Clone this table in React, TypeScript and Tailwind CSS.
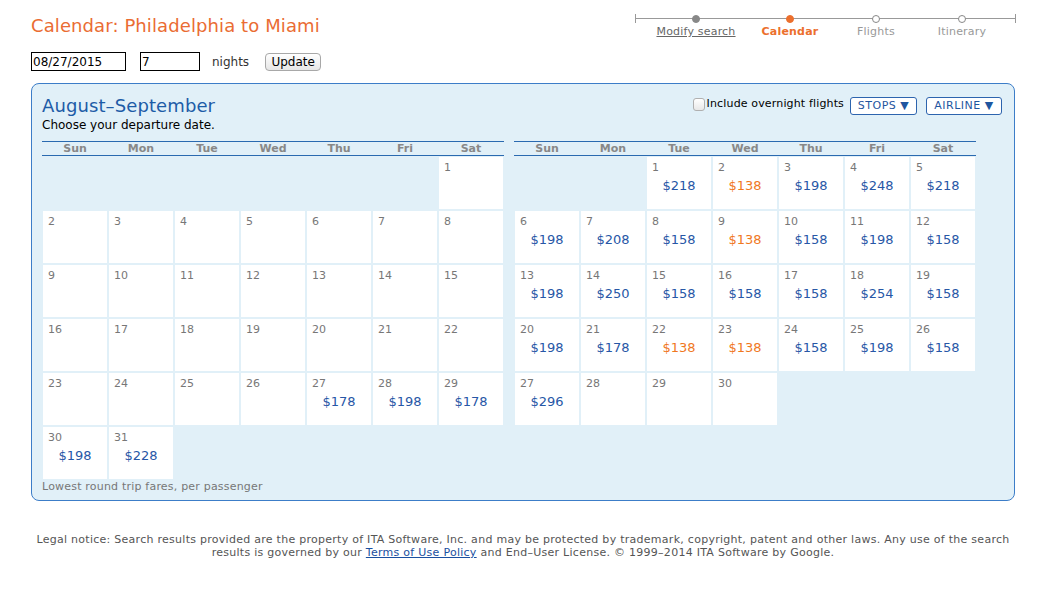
import React from "react";

const augPrices: Record<number, [string, boolean?]> = {
  27: ["$178"],
  28: ["$198"],
  29: ["$178"],
  30: ["$198"],
  31: ["$228"],
};

const sepPrices: Record<number, [string, boolean?]> = {
  1: ["$218"], 2: ["$138", true], 3: ["$198"], 4: ["$248"], 5: ["$218"],
  6: ["$198"], 7: ["$208"], 8: ["$158"], 9: ["$138", true], 10: ["$158"], 11: ["$198"], 12: ["$158"],
  13: ["$198"], 14: ["$250"], 15: ["$158"], 16: ["$158"], 17: ["$158"], 18: ["$254"], 19: ["$158"],
  20: ["$198"], 21: ["$178"], 22: ["$138", true], 23: ["$138", true], 24: ["$158"], 25: ["$198"], 26: ["$158"],
  27: ["$296"],
};

const weekdays = ["Sun", "Mon", "Tue", "Wed", "Thu", "Fri", "Sat"];

function MonthGrid({ offset, days, rows, prices }: { offset: number; days: number; rows: number; prices: Record<number, [string, boolean?]> }) {
  const cells = Array.from({ length: rows * 7 }, (_, i) => i - offset + 1);
  return (
    <div className="w-[462px]">
      <div className="grid h-[15px] grid-cols-7 border-y border-[#2a6ab0] pt-[1px] text-center text-[11px] font-bold leading-[12px] text-[#888]">
        {weekdays.map((d) => (
          <div key={d}>{d}</div>
        ))}
      </div>
      <div className="grid auto-rows-[52px] grid-cols-7 gap-[2px] px-[1px] pt-[1px]">
        {cells.map((day, i) =>
          day >= 1 && day <= days ? (
            <div key={i} className="bg-white pl-[5px] pt-[4px]">
              <div className="text-[11px] leading-[13px] text-[#777]">{day}</div>
              {prices[day] ? (
                <div className={`mt-[4px] pr-[5px] text-center text-[13px] leading-[16px] ${prices[day][1] ? "text-[#f0781e]" : "text-[#2757a6]"}`}>
                  {prices[day][0]}
                </div>
              ) : null}
            </div>
          ) : (
            <div key={i} />
          )
        )}
      </div>
    </div>
  );
}

function Stepper() {
  const steps = [
    { label: "Modify search", w: "w-[80px]", dot: "bg-[#888] border-[#888]", text: "text-[#666] underline" },
    { label: "Calendar", w: "w-[108px]", dot: "bg-[#ec6f2d] border-[#ec6f2d]", text: "font-bold text-[#ec6f2d]" },
    { label: "Flights", w: "w-[64px]", dot: "bg-white border-[#888]", text: "text-[#999]" },
    { label: "Itinerary", w: "w-[108px]", dot: "bg-white border-[#888]", text: "text-[#999]" },
  ];
  return (
    <div className="relative mr-[-1px] flex w-[381px] pl-[21px]">
      <div className="absolute left-0 right-0 top-[18px] h-px bg-[#999]" />
      <div className="absolute left-0 top-[14px] h-[9px] w-px bg-[#999]" />
      <div className="absolute right-0 top-[14px] h-[9px] w-px bg-[#999]" />
      {steps.map((s) => (
        <div key={s.label} className={`relative flex flex-col items-center pt-[15px] ${s.w}`}>
          <div className={`h-[8px] w-[8px] rounded-full border ${s.dot}`} />
          <div className={`mt-[2px] whitespace-nowrap text-[11px] leading-[13px] tracking-[0.2px] ${s.text}`}>{s.label}</div>
        </div>
      ))}
    </div>
  );
}

export default function App() {
  return (
    <div className="min-h-[592px] bg-white font-['DejaVu_Sans',Verdana,sans-serif] text-[#333]">
      <div className="ml-[31px] w-[984px]">
        <div className="flex h-[83px] justify-between">
          <div>
            <h1 className="pt-[15px] text-[18px] leading-[22px] tracking-[0.1px] text-[#ea6c33]">Calendar: Philadelphia to Miami</h1>
            <div className="mt-[15px] flex items-center">
              <input
                readOnly
                defaultValue="08/27/2015"
                className="h-[19px] w-[95px] border border-black px-[1px] text-[12px] text-black outline-none"
              />
              <input
                readOnly
                defaultValue="7"
                className="ml-[14px] h-[19px] w-[60px] border border-black px-[1px] text-[12px] text-black outline-none"
              />
              <span className="ml-[12px] text-[12px] text-[#333]">nights</span>
              <button
                type="button"
                className="ml-[16px] h-[18px] w-[56px] rounded-[4px] border border-[#a8a8a8] bg-gradient-to-b from-white to-[#e6e6e6] text-[12px] leading-[16px] text-black"
              >
                Update
              </button>
            </div>
          </div>
          <Stepper />
        </div>

        <div className="rounded-[8px] border border-[#3c7dc8] bg-[#e1f0f8] px-[10px]">
          <div className="flex h-[57px] justify-between">
            <div className="pt-[11px]">
              <div className="text-[18px] leading-[22px] tracking-[0.1px] text-[#1d5ca7]">August–September</div>
              <div className="text-[12px] leading-[16px] text-black">Choose your departure date.</div>
            </div>
            <div className="mr-[2px] flex items-start pt-[13px]">
              <div className="mt-[1px] h-[13px] w-[12px] rounded-[3px] border border-[#b0b0b0] bg-gradient-to-b from-white to-[#e8e8e8]" />
              <span className="ml-[2px] text-[11px] leading-[13px] tracking-[0.15px] text-black">Include overnight flights</span>
              <button
                type="button"
                className="ml-[6px] h-[18px] w-[67px] rounded-[3px] border border-[#2d64ae] bg-white text-[11px] leading-[16px] tracking-[0.5px] text-[#1f56a0]"
              >
                STOPS ▼
              </button>
              <button
                type="button"
                className="ml-[9px] h-[18px] w-[76px] rounded-[3px] border border-[#2d64ae] bg-white text-[11px] leading-[16px] tracking-[0.5px] text-[#1f56a0]"
              >
                AIRLINE ▼
              </button>
            </div>
          </div>

          <div className="flex items-start gap-[10px]">
            <MonthGrid offset={6} days={31} rows={6} prices={augPrices} />
            <MonthGrid offset={2} days={30} rows={5} prices={sepPrices} />
          </div>

          <div className="mt-[1px] pb-[7px] text-[11px] leading-[13px] tracking-[0.2px] text-[#777]">Lowest round trip fares, per passenger</div>
        </div>

        <div className="mt-[32px] text-center text-[11px] leading-[13px] tracking-[0.27px] text-[#555]">
          <div className="whitespace-nowrap">
            Legal notice: Search results provided are the property of ITA Software, Inc. and may be protected by trademark, copyright, patent and other laws. Any use of the search
          </div>
          <div className="whitespace-nowrap">
            results is governed by our <a className="text-[#1a4fa0] underline">Terms of Use Policy</a> and End–User License. © 1999–2014 ITA Software by Google.
          </div>
        </div>
      </div>
    </div>
  );
}
